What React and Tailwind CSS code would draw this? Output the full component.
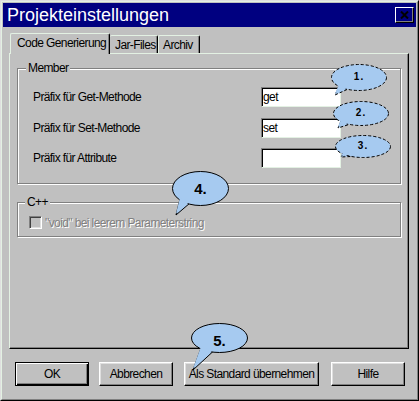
import React from 'react';

// light edge used by the dialog theme (slightly green tinted)
const HI = '#e3f1e3';

const Balloon = ({ left, top, w, h, tail, label, dashed, textClass }) => {
  const rx = w / 2;
  const ry = h / 2;
  const pts = tail.map((p) => p.join(',')).join(' ');
  const dash = dashed ? '3 2' : undefined;
  return (
    <div className="absolute" style={{ left, top, width: w, height: h }}>
      <svg width={w} height={h} className="absolute left-0 top-0 overflow-visible">
        <polygon points={pts} fill="#a6caf0" stroke="#000" strokeWidth="1" strokeDasharray={dash} />
        <ellipse cx={rx} cy={ry} rx={rx - 0.5} ry={ry - 0.5} fill="#a6caf0" stroke="#000" strokeWidth="1" strokeDasharray={dash} />
        <polygon points={pts} fill="#a6caf0" stroke="none" transform={`translate(0,-1.5)`} />
      </svg>
      <div className={`absolute inset-0 flex items-center justify-center font-bold text-black ${textClass}`}>{label}</div>
    </div>
  );
};

const Field = ({ label, value }) => (
  <div className="flex items-center h-[20px]">
    <span className="w-[228px]">{label}</span>
    <div className="w-[80px] h-[20px] bg-white border border-t-[#808080] border-l-[#808080] border-r-[#e3f1e3] border-b-[#e3f1e3] shadow-[inset_1px_1px_0_#000] pl-[1px] flex items-center">
      {value}
    </div>
  </div>
);

const Button = ({ children, width, isDefault }) => (
  <div
    className={`h-[24px] flex items-center justify-center ${
      isDefault
        ? 'border border-black shadow-[inset_1px_1px_0_#fff,inset_-1px_-1px_0_#000,inset_-2px_-2px_0_#808080]'
        : 'border border-t-white border-l-white border-r-black border-b-black shadow-[inset_-1px_-1px_0_#808080,inset_1px_1px_0_#dfdfdf]'
    }`}
    style={{ width }}
  >
    {children}
  </div>
);

export default function App() {
  return (
    <div className="relative w-[419px] h-[401px] bg-[#c0c0c0] border border-t-[#dfdfdf] border-l-[#dfdfdf] border-r-black border-b-black font-['Liberation_Sans',Arial,sans-serif] text-[12px] tracking-[-0.6px] text-black leading-none">
      <div className="h-full border border-t-[#e3f1e3] border-l-[#e3f1e3] border-r-[#808080] border-b-[#808080] p-px flex flex-col">
        {/* Title bar */}
        <div className="h-[24px] bg-[#000080] flex items-center justify-between pl-[4px] pr-[2px]">
          <span className="text-white text-[18px] tracking-normal">Projekteinstellungen</span>
          <div className="w-[19px] h-[16px] flex items-center justify-center border border-t-white border-l-white border-r-black border-b-black shadow-[inset_-1px_-1px_0_#808080]">
            <svg width="9" height="8" viewBox="0 0 9 8">
              <path d="M1 0.5 L8 7.5 M8 0.5 L1 7.5" stroke="#000" strokeWidth="2" />
            </svg>
          </div>
        </div>

        <div className="flex flex-col px-[6px]">
          {/* Tabs */}
          <div className="flex items-end h-[20px] mt-[6px] pl-[1px]">
            <div className="relative z-10 w-[100px] h-[21px] -mb-px bg-[#c0c0c0] border-l border-t border-r border-l-[#e3f1e3] border-t-[#e3f1e3] border-r-black rounded-t-[2px] shadow-[inset_-1px_0_0_#808080] flex items-center pl-[6px] pb-[2px]">
              Code Generierung
            </div>
            <div className="w-[48px] h-[18px] border-t border-r border-t-[#e3f1e3] border-r-black rounded-t-[2px] shadow-[inset_-1px_0_0_#808080] flex items-center pl-[5px]">
              Jar-Files
            </div>
            <div className="w-[42px] h-[18px] border-l border-t border-r border-l-[#e3f1e3] border-t-[#e3f1e3] border-r-black rounded-t-[2px] shadow-[inset_-1px_0_0_#808080] flex items-center pl-[4px]">
              Archiv
            </div>
          </div>

          {/* Panel */}
          <div className="w-[400px] h-[296px] border border-t-[#e3f1e3] border-l-[#e3f1e3] border-r-black border-b-black shadow-[inset_-1px_-1px_0_#808080] pl-[7px] pt-[14px]">
            <div className="relative w-[384px] h-[116px] border border-[#808080] shadow-[inset_1px_1px_0_#fff,1px_1px_0_#fff] pl-[15px] pt-[18px]">
              <span className="absolute left-[8px] -top-[7px] px-[2px] bg-[#c0c0c0]">Member</span>
              <Field label="Präfix für Get-Methode" value="get" />
              <div className="mt-[11px]">
                <Field label="Präfix für Set-Methode" value="set" />
              </div>
              <div className="mt-[10px]">
                <Field label="Präfix für Attribute" value="" />
              </div>
            </div>

            <div className="relative mt-[18px] w-[384px] h-[35px] border border-[#808080] shadow-[inset_1px_1px_0_#fff,1px_1px_0_#fff] pl-[11px] pt-[13px]">
              <span className="absolute left-[7px] -top-[7px] px-[2px] bg-[#c0c0c0]">C++</span>
              <div className="flex items-center">
                <div className="w-[13px] h-[13px] border border-t-[#808080] border-l-[#808080] border-r-white border-b-white shadow-[inset_1px_1px_0_#404040,inset_-1px_-1px_0_#dfdfdf] bg-[#c0c0c0]" />
                <span className="ml-[3px] text-[#808080] [text-shadow:1px_1px_0_#fff]">"void" bei leerem Parameterstring</span>
              </div>
            </div>
          </div>

          {/* Buttons */}
          <div className="flex mt-[13px] pl-[6px]">
            <Button width={74} isDefault>OK</Button>
            <div className="ml-[10px]">
              <Button width={74}>Abbrechen</Button>
            </div>
            <div className="ml-[11px]">
              <Button width={135}>Als Standard übernehmen</Button>
            </div>
            <div className="ml-[12px]">
              <Button width={74}>Hilfe</Button>
            </div>
          </div>
        </div>
      </div>

      {/* Annotation balloons */}
      <Balloon left={330} top={63} w={56} h={27} tail={[[8, 22], [4, 31], [16, 25.5]]} label="1." dashed textClass="text-[10px] tracking-[1px] -mt-[2px]" />
      <Balloon left={332} top={100} w={56} h={25} tail={[[8, 20], [5, 27], [16, 23.5]]} label="2." dashed textClass="text-[10px] tracking-[1px] -mt-[2px]" />
      <Balloon left={334} top={134} w={56} h={23} tail={[[8, 19], [6, 22], [16, 21.5]]} label="3." dashed textClass="text-[10px] tracking-[1px] -mt-[2px]" />
      <Balloon left={171} top={170} w={57} h={35} tail={[[8, 28], [4, 44], [18, 32]]} label="4." textClass="text-[15px] tracking-normal" />
      <Balloon left={190} top={322} w={57} h={30} tail={[[10, 25], [2, 47], [22, 28.5]]} label="5." textClass="text-[15px] tracking-normal mt-[4px]" />
    </div>
  );
}
